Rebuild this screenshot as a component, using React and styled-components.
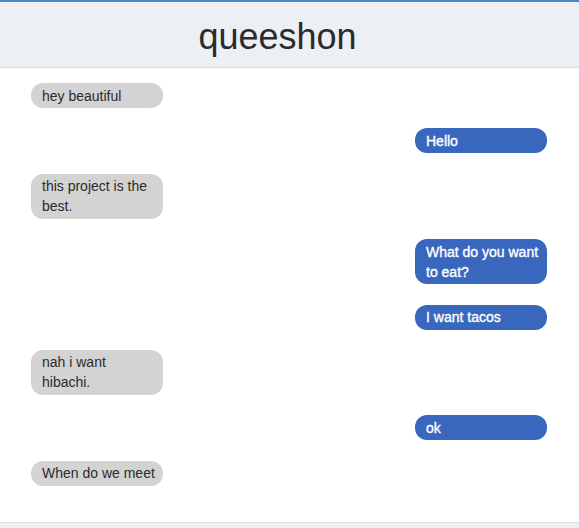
import styled, { createGlobalStyle } from "styled-components";

const messages = [
  { from: "them", text: "hey beautiful" },
  { from: "me", text: "Hello" },
  { from: "them", text: "this project is the best." },
  { from: "me", text: "What do you want to eat?" },
  { from: "me", text: "I want tacos" },
  { from: "them", text: "nah i want hibachi." },
  { from: "me", text: "ok" },
  { from: "them", text: "When do we meet" },
];

const App = () => {
  return (
    <Page>
      <GlobalStyle />
      <Header>
        <Title>queeshon</Title>
      </Header>
      <Thread>
        {messages.map((m, i) => (
          <Bubble key={i} mine={m.from === "me" ? 1 : 0}>
            {m.text}
          </Bubble>
        ))}
      </Thread>
      <Footer />
    </Page>
  );
};

const GlobalStyle = createGlobalStyle`
  html, body {
    margin: 0;
    padding: 0;
    background: #fff;
  }
  body {
    font-family: "Liberation Sans", Arial, Helvetica, sans-serif;
    color: #333;
  }
`;

const Page = styled.div`
  height: 100vh;
  display: flex;
  flex-direction: column;
  overflow: hidden;
`;

const Header = styled.header`
  flex-shrink: 0;
  background: #eceff4;
  border-top: 2px solid #4a86c0;
  border-bottom: 1px solid #d8dbe0;
  padding: 14px 24px 10px 0;
  display: flex;
  justify-content: center;
`;

const Title = styled.h1`
  margin: 0;
  font-size: 36px;
  line-height: 41px;
  font-weight: normal;
  color: #2b2b2b;
`;

const Thread = styled.main`
  flex: 1;
  display: flex;
  flex-direction: column;
  gap: 20.4px;
  padding: 15px 32px 0 31px;
`;

const Bubble = styled.div`
  align-self: ${(props) => (props.mine ? "flex-end" : "flex-start")};
  box-sizing: border-box;
  width: 132px;
  padding: 2.5px 7px 2.5px 11px;
  border-radius: 12px;
  font-size: 14px;
  line-height: 20px;
  background: ${(props) => (props.mine ? "#3967bd" : "#d3d3d3")};
  color: ${(props) => (props.mine ? "#fff" : "#2b2b2b")};
  -webkit-text-stroke: ${(props) => (props.mine ? "0.35px #fff" : "0")};
`;

const Footer = styled.footer`
  flex-shrink: 0;
  height: 5px;
  background: #eceff4;
  border-top: 1px solid #dcdfe4;
`;

export default App;
